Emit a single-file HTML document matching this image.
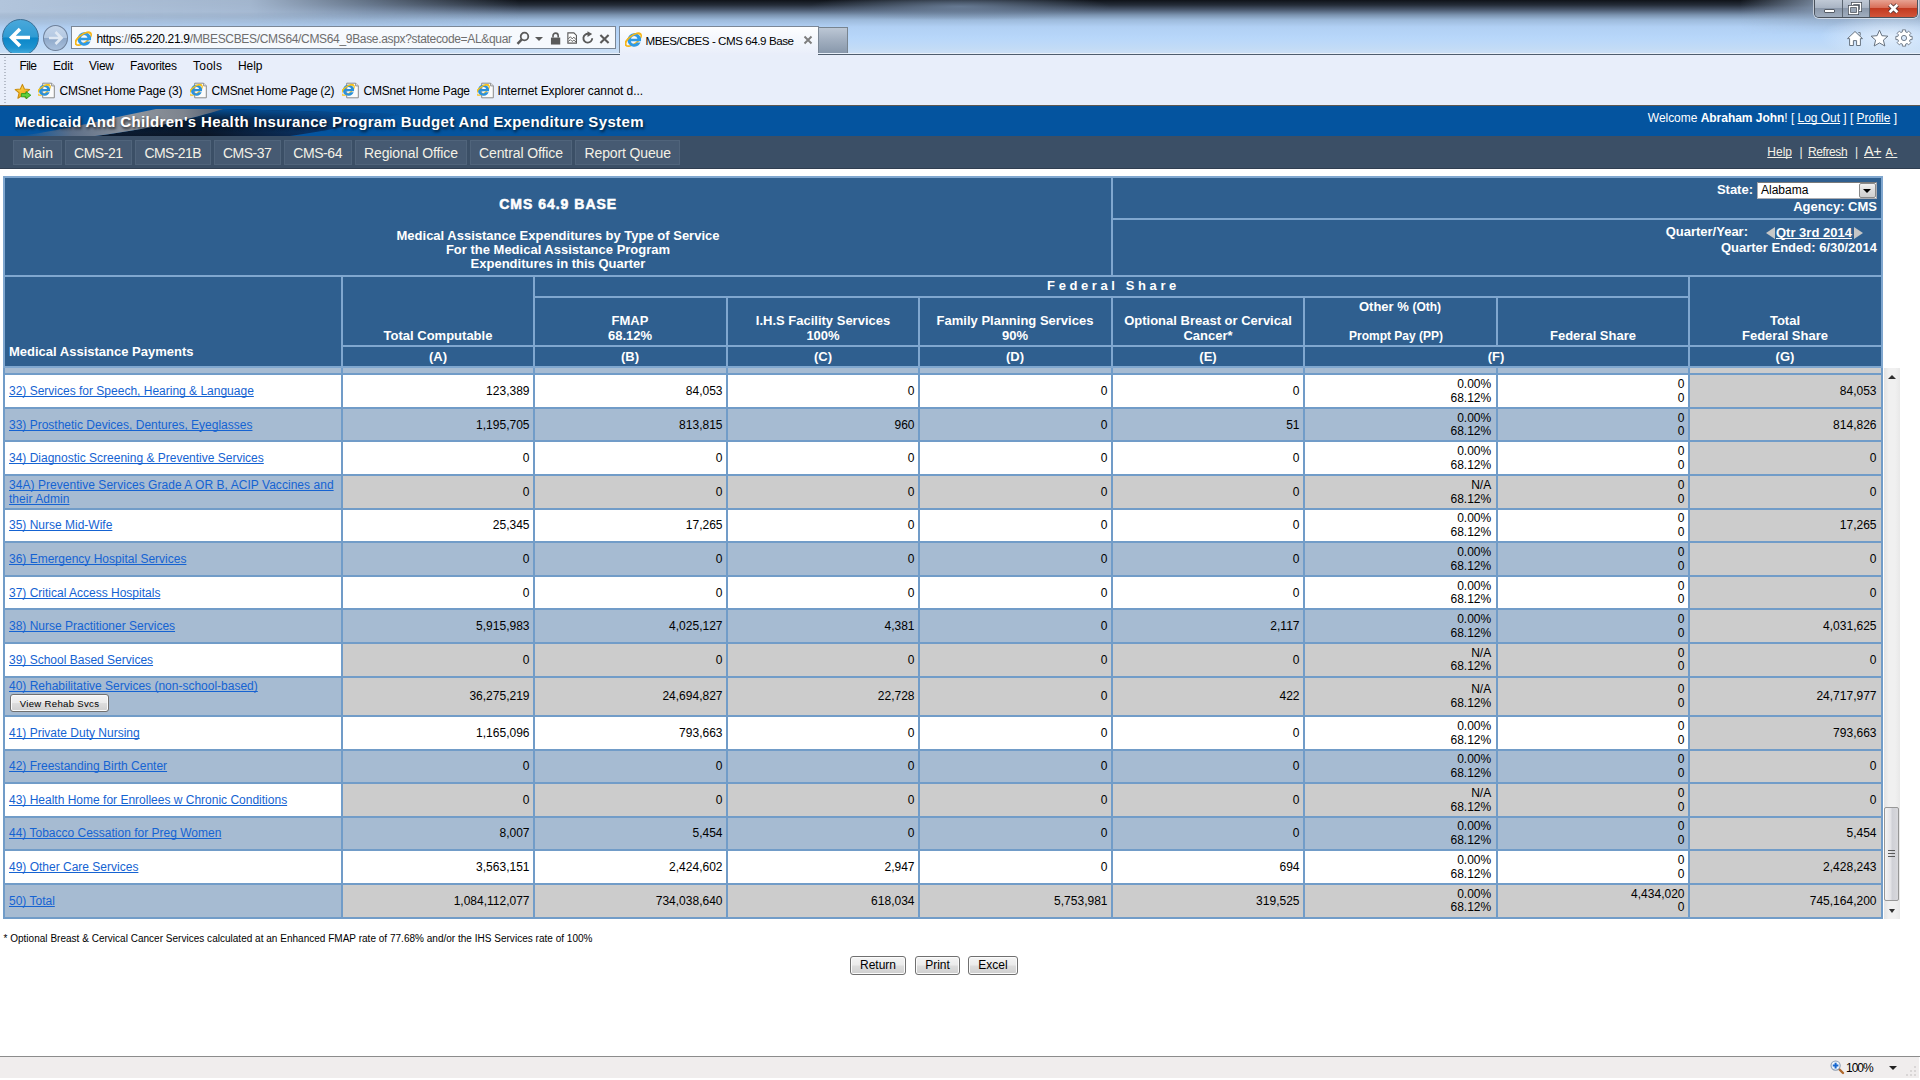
<!DOCTYPE html>
<html><head><meta charset="utf-8"><title>MBES/CBES - CMS 64.9 Base</title>
<style>
html,body{margin:0;padding:0;}
body{width:1920px;height:1080px;overflow:hidden;background:#fff;position:relative;font-family:"Liberation Sans",sans-serif;font-size:12px;color:#000;}
div,span,a{box-sizing:border-box;}
*{text-decoration-skip-ink:none;}
.abs{position:absolute;}
a{color:#1563d2;text-decoration:underline;text-decoration-skip-ink:none;text-underline-offset:1px;}
u{text-decoration-skip-ink:none;}
.ui{font-family:"Liberation Sans",sans-serif;font-size:12px;color:#000;white-space:nowrap;position:absolute;}
.hd{position:absolute;color:#fff;font-weight:bold;font-size:13px;line-height:15px;text-align:center;white-space:nowrap;}
.c{position:absolute;font-size:12px;line-height:14px;white-space:nowrap;}
.n{position:absolute;font-size:12px;line-height:14px;text-align:right;white-space:nowrap;}
.btn{position:absolute;border:1px solid #707070;border-radius:3px;background:linear-gradient(#f4f4f4 0%,#ebebeb 48%,#dddddd 52%,#cfcfcf 100%);box-shadow:inset 0 0 0 1px #fbfbfb;text-align:center;color:#000;white-space:nowrap;}
</style></head><body>

<div class="abs" style="left:0;top:0;width:1920px;height:54px;background:linear-gradient(180deg,#0f1319 0px,#252d39 5px,#4d5c72 10px,#7b93b0 15px,#9dbadb 20px,#b1d0f4 27px,#b8d7fa 38px,#c2dbf6 48px,#cde0f4 54px);"></div>
<div class="abs" style="left:0;top:0;width:520px;height:30px;background:linear-gradient(90deg,rgba(178,197,220,1) 0px,rgba(170,190,215,0.95) 250px,rgba(150,172,200,0.6) 370px,rgba(150,172,200,0) 520px);-webkit-mask-image:linear-gradient(180deg,#000 0,#000 12px,transparent 30px);mask-image:linear-gradient(180deg,#000 0,#000 12px,transparent 30px);"></div>
<div class="abs" style="left:800px;top:0;width:320px;height:22px;background:radial-gradient(ellipse 150px 14px at 50% 30%,rgba(120,142,170,0.75),rgba(120,142,170,0));"></div>
<div class="abs" style="left:1740px;top:0;width:180px;height:34px;background:linear-gradient(270deg,rgba(160,180,204,0.95) 0px,rgba(150,170,196,0.85) 90px,rgba(150,170,196,0) 180px);-webkit-mask-image:linear-gradient(180deg,#000 0,#000 8px,transparent 34px);mask-image:linear-gradient(180deg,#000 0,#000 8px,transparent 34px);"></div>
<div class="abs" style="left:1800px;top:16px;width:120px;height:38px;background:radial-gradient(ellipse 70px 22px at 75% 55%,rgba(240,246,253,0.75),rgba(240,246,253,0));"></div>
<div class="abs" style="left:1814px;top:-1px;width:104px;height:19px;border:1px solid #4a525c;border-top:none;border-radius:0 0 5px 5px;overflow:hidden;box-shadow:0 0 0 1px rgba(255,255,255,0.55);"><div class="abs" style="left:0;top:0;width:28px;height:19px;background:linear-gradient(#c3ccd8 0,#aab5c4 45%,#8b98aa 50%,#a3b0c1 100%);border-right:1px solid #5b6570;"></div><div class="abs" style="left:28px;top:0;width:27px;height:19px;background:linear-gradient(#c3ccd8 0,#aab5c4 45%,#8b98aa 50%,#a3b0c1 100%);border-right:1px solid #5b6570;"></div><div class="abs" style="left:55px;top:0;width:49px;height:19px;background:linear-gradient(#e9a99a 0,#d9705a 45%,#c23a20 50%,#d4583d 100%);"></div></div>
<div class="abs" style="left:1824px;top:9px;width:11px;height:4px;background:#fff;border:1px solid #555c66;border-radius:1px;"></div>
<svg class="abs" style="left:1848px;top:2px" width="14" height="13" viewBox="0 0 14 13"><rect x="4.5" y="1.5" width="8" height="7" fill="none" stroke="#48505a" stroke-width="3"/><rect x="4.5" y="1.5" width="8" height="7" fill="none" stroke="#fff" stroke-width="1.4"/><rect x="1.5" y="4.5" width="8" height="7" fill="#9aa6b6" stroke="#48505a" stroke-width="3"/><rect x="1.5" y="4.5" width="8" height="7" fill="none" stroke="#fff" stroke-width="1.4"/></svg>
<svg class="abs" style="left:1887px;top:3px" width="13" height="11" viewBox="0 0 13 11"><path d="M2.6 1.8 L10.4 9.2 M10.4 1.8 L2.6 9.2" stroke="#553636" stroke-width="4.4" stroke-linecap="butt"/><path d="M2.6 1.8 L10.4 9.2 M10.4 1.8 L2.6 9.2" stroke="#fff" stroke-width="2.7" stroke-linecap="butt"/></svg>
<div class="abs" style="left:0;top:0;width:80px;height:53px;overflow:hidden;"><div class="abs" style="left:2px;top:19px;width:37px;height:37px;border-radius:50%;border:1px solid #3a6f96;background:linear-gradient(180deg,#4aa8db 0%,#2f9bd3 49%,#0a86c8 51%,#1d93d0 80%,#54b3e0 100%);"></div><svg class="abs" style="left:9px;top:27px" width="23" height="21" viewBox="0 0 23 21"><path d="M11 2 L2.5 10.5 L11 19 M3.5 10.5 H21" fill="none" stroke="#fff" stroke-width="3.6" stroke-linejoin="miter"/></svg><div class="abs" style="left:43px;top:25px;width:25px;height:26px;border-radius:50%;border:1px solid #6f819a;background:linear-gradient(180deg,#c3d4e9 0%,#b3c8e2 49%,#8ea8c9 51%,#a9c0dc 100%);"></div><svg class="abs" style="left:47px;top:30px" width="17" height="16" viewBox="0 0 17 16"><path d="M8.5 2 L14.5 8 L8.5 14 M14 8 H2" fill="none" stroke="#dfe8f3" stroke-width="2.6"/></svg></div>
<div class="abs" style="left:71px;top:26px;width:545px;height:23px;border:1px solid #7b8796;background:#f6f9fd;"></div>
<svg class="abs" style="left:74.5px;top:29.5px" width="17.5" height="17.5" viewBox="0 0 16 16"><ellipse cx="7.6" cy="8" rx="8.4" ry="3.9" transform="rotate(-36 7.6 8)" fill="none" stroke="#f6b619" stroke-width="1.5"/><path d="M8.4 2a6.2 6.2 0 1 0 5.8 8.6h-3.4a3.1 3.1 0 0 1-5.5-1.3h9.3a6.2 6.2 0 0 0-6.2-7.3zm-3 5a3.1 3.1 0 0 1 6 0z" fill="#2e9ae4"/><path d="M-0.8 8 A8.4 3.9 0 0 1 16 8" transform="rotate(-36 7.6 8)" fill="none" stroke="#f6b619" stroke-width="1.5"/></svg>
<div class="ui" style="left:96.5px;top:32px;font-size:12px;line-height:14px;font-weight:normal;letter-spacing:-0.330px;"><span style="color:#000">https</span><span style="color:#6e6e6e">://</span><span style="color:#000">65.220.21.9</span><span style="color:#6e6e6e">/MBESCBES/CMS64/CMS64_9Base.aspx?statecode=AL&amp;quar</span></div>
<svg class="abs" style="left:516px;top:31px" width="14" height="15" viewBox="0 0 14 15"><circle cx="8.5" cy="5.5" r="3.8" fill="none" stroke="#5a5a5a" stroke-width="1.8"/><path d="M5.8 8.3 L1.5 12.8" stroke="#5a5a5a" stroke-width="2.4"/></svg>
<div class="abs" style="left:535px;top:37px;width:0;height:0;border-left:4px solid transparent;border-right:4px solid transparent;border-top:4px solid #5a5a5a;"></div>
<svg class="abs" style="left:550px;top:31.5px" width="11.2" height="13" viewBox="0 0 12 14"><rect x="1" y="6" width="10" height="7.5" fill="#5a5a5a"/><path d="M3.2 6 V4 a2.8 2.8 0 0 1 5.6 0 V6" fill="none" stroke="#5a5a5a" stroke-width="1.7"/></svg>
<svg class="abs" style="left:567px;top:32px" width="10.3" height="12" viewBox="0 0 12 14"><path d="M1 1 H8 L11 4 V13 H1 Z" fill="#fff" stroke="#5a5a5a" stroke-width="1.3"/><path d="M1.5 8 L4 5.5 L6 8 L8 6 L10.5 9 M1.5 11 L4 9 L6 11 L8 9.5 L10.5 11.5" fill="none" stroke="#5a5a5a" stroke-width="1.1"/></svg>
<svg class="abs" style="left:581px;top:31px" width="14" height="14" viewBox="0 0 14 14"><path d="M11.2 7.2 A4.4 4.4 0 1 1 7.6 2.9" fill="none" stroke="#5a5a5a" stroke-width="1.9"/><path d="M6.5 0.2 L11.2 3 L6.5 6 Z" fill="#5a5a5a"/></svg>
<svg class="abs" style="left:598.5px;top:33.5px" width="11" height="10" viewBox="0 0 12 11"><path d="M1.5 1 L10.5 10 M10.5 1 L1.5 10" stroke="#5a5a5a" stroke-width="2.3"/></svg>
<div class="abs" style="left:619px;top:26px;width:200px;height:28px;border:1px solid #7b8796;border-bottom:none;background:linear-gradient(#fdfeff,#f1f5fc 60%,#e9eefa);"></div>
<svg class="abs" style="left:624.5px;top:31px" width="17.5" height="17.5" viewBox="0 0 16 16"><ellipse cx="7.6" cy="8" rx="8.4" ry="3.9" transform="rotate(-36 7.6 8)" fill="none" stroke="#f6b619" stroke-width="1.5"/><path d="M8.4 2a6.2 6.2 0 1 0 5.8 8.6h-3.4a3.1 3.1 0 0 1-5.5-1.3h9.3a6.2 6.2 0 0 0-6.2-7.3zm-3 5a3.1 3.1 0 0 1 6 0z" fill="#2e9ae4"/><path d="M-0.8 8 A8.4 3.9 0 0 1 16 8" transform="rotate(-36 7.6 8)" fill="none" stroke="#f6b619" stroke-width="1.5"/></svg>
<div class="ui" style="left:645.5px;top:34px;font-size:11.6px;line-height:14px;font-weight:normal;letter-spacing:-0.444px;">MBES/CBES - CMS 64.9 Base</div>
<svg class="abs" style="left:803px;top:35px" width="10" height="10" viewBox="0 0 10 10"><path d="M1.5 1.5 L8.5 8.5 M8.5 1.5 L1.5 8.5" stroke="#7d7d7d" stroke-width="1.9"/></svg>
<div class="abs" style="left:819px;top:27px;width:29px;height:26px;border:1px solid #78848f;border-left:none;border-bottom:none;background:linear-gradient(180deg,#bcc7d5 0%,#a3b0c1 45%,#8898ab 100%);"></div>
<svg class="abs" style="left:1846px;top:30px" width="18" height="17" viewBox="0 0 18 17"><path d="M9 1.5 L1.5 8.6 H3.6 V15.5 H7.4 V10.6 H10.6 V15.5 H14.4 V8.6 H16.5 Z M12.3 2.6 h1.9 v3" fill="#fff" stroke="#66727f" stroke-width="1" stroke-linejoin="round"/></svg>
<svg class="abs" style="left:1870px;top:29px" width="19" height="18" viewBox="0 0 19 18"><path d="M9.5 1.2 L11.9 6.7 L17.9 7.2 L13.4 11.1 L14.8 17 L9.5 13.9 L4.2 17 L5.6 11.1 L1.1 7.2 L7.1 6.7 Z" fill="#fff" stroke="#66727f" stroke-width="1" stroke-linejoin="round"/></svg>
<svg class="abs" style="left:1895px;top:29px" width="18" height="18" viewBox="0 0 18 18"><g fill="#fff" stroke="#66727f" stroke-width="0.9"><path fill-rule="evenodd" d="M17.15,7.43 L17.15,10.57 L15.07,10.68 L14.48,12.11 L15.87,13.65 L13.65,15.87 L12.11,14.48 L10.68,15.07 L10.57,17.15 L7.43,17.15 L7.32,15.07 L5.89,14.48 L4.35,15.87 L2.13,13.65 L3.52,12.11 L2.93,10.68 L0.85,10.57 L0.85,7.43 L2.93,7.32 L3.52,5.89 L2.13,4.35 L4.35,2.13 L5.89,3.52 L7.32,2.93 L7.43,0.85 L10.57,0.85 L10.68,2.93 L12.11,3.52 L13.65,2.13 L15.87,4.35 L14.48,5.89 L15.07,7.32 Z M11.6 9 A2.6 2.6 0 1 0 6.4 9 A2.6 2.6 0 1 0 11.6 9 Z"/></g></svg>
<div class="abs" style="left:0;top:53px;width:1920px;height:1px;background:#e8f0fa;"></div>
<div class="abs" style="left:0;top:54px;width:1920px;height:1px;background:#4f5d6d;"></div>
<div class="abs" style="left:620px;top:53px;width:198px;height:2px;background:#e9eefa;"></div>
<div class="abs" style="left:0;top:55px;width:1920px;height:50px;background:#e8eefa;"></div>
<div class="abs" style="left:4px;top:57px;width:2px;height:46px;background:repeating-linear-gradient(180deg,#b5bcc9 0,#b5bcc9 1px,transparent 1px,transparent 3px);"></div>
<div class="ui" style="left:19.5px;top:58px;font-size:12px;line-height:16px;font-weight:normal;letter-spacing:-0.615px;">File</div>
<div class="ui" style="left:53px;top:58px;font-size:12px;line-height:16px;font-weight:normal;letter-spacing:-0.229px;">Edit</div>
<div class="ui" style="left:89px;top:58px;font-size:12px;line-height:16px;font-weight:normal;letter-spacing:-0.266px;">View</div>
<div class="ui" style="left:130px;top:58px;font-size:12px;line-height:16px;font-weight:normal;letter-spacing:-0.295px;">Favorites</div>
<div class="ui" style="left:193px;top:58px;font-size:12px;line-height:16px;font-weight:normal;letter-spacing:0.246px;">Tools</div>
<div class="ui" style="left:238px;top:58px;font-size:12px;line-height:16px;font-weight:normal;letter-spacing:-0.062px;">Help</div>
<svg class="abs" style="left:14px;top:83px" width="18" height="17" viewBox="0 0 18 17"><defs><linearGradient id="stg" x1="0" y1="0" x2="0.6" y2="1"><stop offset="0" stop-color="#fff3b8"/><stop offset="0.45" stop-color="#fbc638"/><stop offset="1" stop-color="#ef9d12"/></linearGradient></defs><path d="M8.4 1.4 L10.4 6 L15.6 6.5 L11.7 9.9 L12.9 15.2 L8.4 12.4 L3.9 15.2 L5.1 9.9 L1.2 6.5 L6.4 6 Z" fill="url(#stg)" stroke="#c98d0e" stroke-width="1.1" stroke-linejoin="round"/><path d="M7.3 10.6 H12 V8.6 L16.8 12.2 L12 15.8 V13.8 H7.3 Z" fill="#5fd13f" stroke="#2e9a1c" stroke-width="0.9" stroke-linejoin="round"/></svg>
<svg class="abs" style="left:38px;top:82.3px" width="17" height="17" viewBox="0 0 17 17"><path d="M4.7 1.2 H13.6 L16.3 3.9 V15.8 H4.7 Z" fill="#fbfbfb" stroke="#8a8a8a" stroke-width="1"/><path d="M13.6 1.2 V3.9 H16.3" fill="#eaeaea" stroke="#8a8a8a" stroke-width="0.9"/><g transform="translate(-0.95,0.9) scale(0.887)"><ellipse cx="7.6" cy="8" rx="8.4" ry="3.9" transform="rotate(-36 7.6 8)" fill="none" stroke="#f7c21a" stroke-width="1.5"/><path d="M8.4 2a6.2 6.2 0 1 0 5.8 8.6h-3.4a3.1 3.1 0 0 1-5.5-1.3h9.3a6.2 6.2 0 0 0-6.2-7.3zm-3 5a3.1 3.1 0 0 1 6 0z" fill="#2a90da"/><path d="M-0.8 8 A8.4 3.9 0 0 1 16 8" transform="rotate(-36 7.6 8)" fill="none" stroke="#f7c21a" stroke-width="1.5"/></g></svg>
<div class="ui" style="left:59.5px;top:83px;font-size:12px;line-height:16px;font-weight:normal;letter-spacing:-0.266px;">CMSnet Home Page (3)</div>
<svg class="abs" style="left:190px;top:82.3px" width="17" height="17" viewBox="0 0 17 17"><path d="M4.7 1.2 H13.6 L16.3 3.9 V15.8 H4.7 Z" fill="#fbfbfb" stroke="#8a8a8a" stroke-width="1"/><path d="M13.6 1.2 V3.9 H16.3" fill="#eaeaea" stroke="#8a8a8a" stroke-width="0.9"/><g transform="translate(-0.95,0.9) scale(0.887)"><ellipse cx="7.6" cy="8" rx="8.4" ry="3.9" transform="rotate(-36 7.6 8)" fill="none" stroke="#f7c21a" stroke-width="1.5"/><path d="M8.4 2a6.2 6.2 0 1 0 5.8 8.6h-3.4a3.1 3.1 0 0 1-5.5-1.3h9.3a6.2 6.2 0 0 0-6.2-7.3zm-3 5a3.1 3.1 0 0 1 6 0z" fill="#2a90da"/><path d="M-0.8 8 A8.4 3.9 0 0 1 16 8" transform="rotate(-36 7.6 8)" fill="none" stroke="#f7c21a" stroke-width="1.5"/></g></svg>
<div class="ui" style="left:211.5px;top:83px;font-size:12px;line-height:16px;font-weight:normal;letter-spacing:-0.266px;">CMSnet Home Page (2)</div>
<svg class="abs" style="left:342px;top:82.3px" width="17" height="17" viewBox="0 0 17 17"><path d="M4.7 1.2 H13.6 L16.3 3.9 V15.8 H4.7 Z" fill="#fbfbfb" stroke="#8a8a8a" stroke-width="1"/><path d="M13.6 1.2 V3.9 H16.3" fill="#eaeaea" stroke="#8a8a8a" stroke-width="0.9"/><g transform="translate(-0.95,0.9) scale(0.887)"><ellipse cx="7.6" cy="8" rx="8.4" ry="3.9" transform="rotate(-36 7.6 8)" fill="none" stroke="#f7c21a" stroke-width="1.5"/><path d="M8.4 2a6.2 6.2 0 1 0 5.8 8.6h-3.4a3.1 3.1 0 0 1-5.5-1.3h9.3a6.2 6.2 0 0 0-6.2-7.3zm-3 5a3.1 3.1 0 0 1 6 0z" fill="#2a90da"/><path d="M-0.8 8 A8.4 3.9 0 0 1 16 8" transform="rotate(-36 7.6 8)" fill="none" stroke="#f7c21a" stroke-width="1.5"/></g></svg>
<div class="ui" style="left:363.5px;top:83px;font-size:12px;line-height:16px;font-weight:normal;letter-spacing:-0.237px;">CMSnet Home Page</div>
<svg class="abs" style="left:477px;top:82.3px" width="17" height="17" viewBox="0 0 17 17"><path d="M4.7 1.2 H13.6 L16.3 3.9 V15.8 H4.7 Z" fill="#fbfbfb" stroke="#8a8a8a" stroke-width="1"/><path d="M13.6 1.2 V3.9 H16.3" fill="#eaeaea" stroke="#8a8a8a" stroke-width="0.9"/><g transform="translate(-0.95,0.9) scale(0.887)"><ellipse cx="7.6" cy="8" rx="8.4" ry="3.9" transform="rotate(-36 7.6 8)" fill="none" stroke="#f7c21a" stroke-width="1.5"/><path d="M8.4 2a6.2 6.2 0 1 0 5.8 8.6h-3.4a3.1 3.1 0 0 1-5.5-1.3h9.3a6.2 6.2 0 0 0-6.2-7.3zm-3 5a3.1 3.1 0 0 1 6 0z" fill="#2a90da"/><path d="M-0.8 8 A8.4 3.9 0 0 1 16 8" transform="rotate(-36 7.6 8)" fill="none" stroke="#f7c21a" stroke-width="1.5"/></g></svg>
<div class="ui" style="left:497.5px;top:83px;font-size:12px;line-height:16px;font-weight:normal;letter-spacing:-0.093px;">Internet Explorer cannot d...</div>
<div class="abs" style="left:0;top:105px;width:1920px;height:31px;background:#04549f;overflow:hidden;"><svg class="abs" style="left:0;top:0" width="700" height="31" viewBox="0 0 700 31"><defs><linearGradient id="sw1" gradientUnits="userSpaceOnUse" x1="20" y1="31" x2="225" y2="4"><stop offset="0" stop-color="#04549f"/><stop offset="0.25" stop-color="#5d6f88"/><stop offset="0.55" stop-color="#8f959d"/><stop offset="0.8" stop-color="#7d848e"/><stop offset="1" stop-color="#4c5a6e"/></linearGradient><linearGradient id="sw2" gradientUnits="userSpaceOnUse" x1="90" y1="0" x2="420" y2="0"><stop offset="0" stop-color="#0b1a2e"/><stop offset="0.35" stop-color="#0a1424"/><stop offset="0.7" stop-color="#0a3163"/><stop offset="1" stop-color="#04549f"/></linearGradient><linearGradient id="sw3" gradientUnits="userSpaceOnUse" x1="0" y1="4" x2="0" y2="31"><stop offset="0" stop-color="#04549f" stop-opacity="0.9"/><stop offset="0.35" stop-color="#04549f" stop-opacity="0.25"/><stop offset="1" stop-color="#04549f" stop-opacity="0"/></linearGradient></defs><path d="M95 31 C150 24 190 14 224 4 L300 6 L400 9 C360 19 320 27 290 31 Z" fill="url(#sw2)"/><path d="M95 31 C150 24 190 14 224 4 L300 6 L400 9 C360 19 320 27 290 31 Z" fill="url(#sw3)"/><path d="M20 31 C70 24 115 12 156 4 L224 4 C190 14 150 24 95 31 Z" fill="url(#sw1)"/></svg></div>
<div class="abs" style="left:14.5px;top:112px;font-weight:bold;font-size:15px;line-height:20px;color:#fff;white-space:nowrap;letter-spacing:0.354px;text-shadow:1px 2px 3px rgba(0,0,0,0.75);">Medicaid And Children's Health Insurance Program Budget And Expenditure System</div>
<div class="abs" style="left:1647.8px;top:110px;font-size:12px;line-height:16px;color:#fff;white-space:nowrap;letter-spacing:-0.031px;">Welcome <b>Abraham John</b>! [ <u>Log Out</u> ] [ <u>Profile</u> ]</div>
<div class="abs" style="left:0;top:136px;width:1920px;height:33px;background:#3b4f66;border-bottom:1px solid #2f3e51;"></div>
<div class="abs" style="left:0;top:105px;width:1920px;height:1px;background:#5f574f;"></div>
<div class="abs" style="left:13px;top:140px;width:49px;height:25px;background:#465a72;border:1px solid #50647b;"></div>
<div class="abs" style="left:22.5px;top:145px;color:#f4f1e6;font-size:14px;line-height:17px;white-space:nowrap;letter-spacing:0.047px;">Main</div>
<div class="abs" style="left:65px;top:140px;width:67px;height:25px;background:#465a72;border:1px solid #50647b;"></div>
<div class="abs" style="left:74px;top:145px;color:#f4f1e6;font-size:14px;line-height:17px;white-space:nowrap;letter-spacing:-0.472px;">CMS-21</div>
<div class="abs" style="left:135px;top:140px;width:76px;height:25px;background:#465a72;border:1px solid #50647b;"></div>
<div class="abs" style="left:144.5px;top:145px;color:#f4f1e6;font-size:14px;line-height:17px;white-space:nowrap;letter-spacing:-0.615px;">CMS-21B</div>
<div class="abs" style="left:214px;top:140px;width:67px;height:25px;background:#465a72;border:1px solid #50647b;"></div>
<div class="abs" style="left:223px;top:145px;color:#f4f1e6;font-size:14px;line-height:17px;white-space:nowrap;letter-spacing:-0.512px;">CMS-37</div>
<div class="abs" style="left:284px;top:140px;width:68px;height:25px;background:#465a72;border:1px solid #50647b;"></div>
<div class="abs" style="left:293.2px;top:145px;color:#f4f1e6;font-size:14px;line-height:17px;white-space:nowrap;letter-spacing:-0.412px;">CMS-64</div>
<div class="abs" style="left:355px;top:140px;width:112px;height:25px;background:#465a72;border:1px solid #50647b;"></div>
<div class="abs" style="left:364px;top:145px;color:#f4f1e6;font-size:14px;line-height:17px;white-space:nowrap;letter-spacing:-0.105px;">Regional Office</div>
<div class="abs" style="left:470px;top:140px;width:102px;height:25px;background:#465a72;border:1px solid #50647b;"></div>
<div class="abs" style="left:479px;top:145px;color:#f4f1e6;font-size:14px;line-height:17px;white-space:nowrap;letter-spacing:-0.103px;">Central Office</div>
<div class="abs" style="left:575px;top:140px;width:105px;height:25px;background:#465a72;border:1px solid #50647b;"></div>
<div class="abs" style="left:584.5px;top:145px;color:#f4f1e6;font-size:14px;line-height:17px;white-space:nowrap;letter-spacing:-0.132px;">Report Queue</div>
<div class="abs" style="left:1767.3px;top:144px;font-size:12px;line-height:16px;color:#f4f1e6;white-space:nowrap;letter-spacing:0.004px;"><u>Help</u></div>
<div class="abs" style="left:1799.5px;top:144px;font-size:12px;line-height:16px;color:#f4f1e6;white-space:nowrap;">|</div>
<div class="abs" style="left:1808px;top:144px;font-size:12px;line-height:16px;color:#f4f1e6;white-space:nowrap;letter-spacing:-0.405px;"><u>Refresh</u></div>
<div class="abs" style="left:1855px;top:144px;font-size:12px;line-height:16px;color:#f4f1e6;white-space:nowrap;">|</div>
<div class="abs" style="left:1864px;top:142.5px;font-size:14.5px;line-height:16px;color:#f4f1e6;white-space:nowrap;letter-spacing:-0.441px;"><u>A+</u></div>
<div class="abs" style="left:1885.6px;top:144.3px;font-size:11px;line-height:16px;color:#f4f1e6;white-space:nowrap;letter-spacing:0.400px;"><u>A-</u></div>
<div style="position:absolute;left:3px;top:176px;width:1880px;height:192px;background:#80a7cf;"></div>
<div style="position:absolute;left:3px;top:368px;width:1880px;height:551px;background:#719cc8;"></div>
<div style="position:absolute;left:5px;top:178px;width:1106px;height:97px;background:#2f5f8f;"></div>
<div style="position:absolute;left:1113px;top:178px;width:768px;height:40px;background:#2f5f8f;"></div>
<div style="position:absolute;left:1113px;top:220px;width:768px;height:55px;background:#2f5f8f;"></div>
<div style="position:absolute;left:5px;top:277px;width:336px;height:89px;background:#2f5f8f;"></div>
<div style="position:absolute;left:343px;top:277px;width:190px;height:68px;background:#2f5f8f;"></div>
<div style="position:absolute;left:535px;top:277px;width:1153px;height:19px;background:#2f5f8f;"></div>
<div style="position:absolute;left:1690px;top:277px;width:191px;height:68px;background:#2f5f8f;"></div>
<div style="position:absolute;left:535px;top:298px;width:191px;height:47px;background:#2f5f8f;"></div>
<div style="position:absolute;left:728px;top:298px;width:190px;height:47px;background:#2f5f8f;"></div>
<div style="position:absolute;left:920px;top:298px;width:191px;height:47px;background:#2f5f8f;"></div>
<div style="position:absolute;left:1113px;top:298px;width:190px;height:47px;background:#2f5f8f;"></div>
<div style="position:absolute;left:1305px;top:298px;width:191px;height:47px;background:#2f5f8f;"></div>
<div style="position:absolute;left:1498px;top:298px;width:190px;height:47px;background:#2f5f8f;"></div>
<div style="position:absolute;left:343px;top:347px;width:190px;height:19px;background:#2f5f8f;"></div>
<div style="position:absolute;left:535px;top:347px;width:191px;height:19px;background:#2f5f8f;"></div>
<div style="position:absolute;left:728px;top:347px;width:190px;height:19px;background:#2f5f8f;"></div>
<div style="position:absolute;left:920px;top:347px;width:191px;height:19px;background:#2f5f8f;"></div>
<div style="position:absolute;left:1113px;top:347px;width:190px;height:19px;background:#2f5f8f;"></div>
<div style="position:absolute;left:1305px;top:347px;width:383px;height:19px;background:#2f5f8f;"></div>
<div style="position:absolute;left:1690px;top:347px;width:191px;height:19px;background:#2f5f8f;"></div>
<div class="hd" style="left:358.20000000000005px;width:400px;top:197px;font-size:14px;-webkit-text-stroke:0.55px #fff;letter-spacing:0.996px;">CMS 64.9 BASE</div>
<div class="hd" style="left:358px;width:400px;top:229px;line-height:14px;">Medical Assistance Expenditures by Type of Service<br>For the Medical Assistance Program<br>Expenditures in this Quarter</div>
<div class="hd" style="left:913.5px;width:400px;top:278px;letter-spacing:3.6px;">Federal Share</div>
<div class="hd" style="left:238px;width:400px;top:328px;">Total Computable</div>
<div class="hd" style="left:430px;width:400px;top:313px;">FMAP<br>68.12%</div>
<div class="hd" style="left:623px;width:400px;top:313px;">I.H.S Facility Services<br>100%</div>
<div class="hd" style="left:815px;width:400px;top:313px;">Family Planning Services<br>90%</div>
<div class="hd" style="left:1008px;width:400px;top:313px;">Optional Breast or Cervical<br>Cancer*</div>
<div class="hd" style="left:1200px;width:400px;top:299px;">Other % <span style="font-size:12px">(Oth)</span></div>
<div class="hd" style="left:1196px;width:400px;top:328px;"><span style="font-size:12px">Prompt Pay (PP)</span></div>
<div class="hd" style="left:1393px;width:400px;top:328px;">Federal Share</div>
<div class="hd" style="left:1585px;width:400px;top:313px;">Total<br>Federal Share</div>
<div class="hd" style="left:9px;top:344px;text-align:left;">Medical Assistance Payments</div>
<div class="hd" style="left:238px;width:400px;top:349px;">(A)</div>
<div class="hd" style="left:430px;width:400px;top:349px;">(B)</div>
<div class="hd" style="left:623px;width:400px;top:349px;">(C)</div>
<div class="hd" style="left:815px;width:400px;top:349px;">(D)</div>
<div class="hd" style="left:1008px;width:400px;top:349px;">(E)</div>
<div class="hd" style="left:1296px;width:400px;top:349px;">(F)</div>
<div class="hd" style="left:1585px;width:400px;top:349px;">(G)</div>
<div class="hd" style="right:167px;top:182px;text-align:right;">State:</div>
<div class="abs" style="left:1757px;top:182px;width:120px;height:17px;background:#fff;border:1px solid #abadb3;border-top-color:#7a7a7a;"></div>
<div class="abs" style="left:1761px;top:183px;font-size:12px;line-height:14px;color:#000;">Alabama</div>
<div class="abs" style="left:1859px;top:183px;width:17px;height:15px;border:1px solid #8a8a8a;border-radius:2px;background:linear-gradient(#f2f2f2,#dcdcdc 50%,#cfcfcf);"></div>
<div class="abs" style="left:1863px;top:189px;width:0;height:0;border-left:4px solid transparent;border-right:4px solid transparent;border-top:4px solid #000;"></div>
<div class="hd" style="right:43px;top:199px;text-align:right;">Agency: CMS</div>
<div class="hd" style="right:172px;top:224px;text-align:right;">Quarter/Year:</div>
<div class="hd" style="left:1776px;top:225px;text-align:left;text-decoration:underline;">Qtr 3rd 2014</div>
<div class="abs" style="left:1766px;top:227px;width:0;height:0;border-top:6px solid transparent;border-bottom:6px solid transparent;border-right:9px solid #c6c6c6;"></div>
<div class="abs" style="left:1854px;top:227px;width:0;height:0;border-top:6px solid transparent;border-bottom:6px solid transparent;border-left:9px solid #c6c6c6;"></div>
<div class="hd" style="right:43px;top:240px;text-align:right;">Quarter Ended: 6/30/2014</div>
<div style="position:absolute;left:5px;top:368px;width:336px;height:5px;background:#a6bbd2;"></div>
<div style="position:absolute;left:343px;top:368px;width:190px;height:5px;background:#a6bbd2;"></div>
<div style="position:absolute;left:535px;top:368px;width:191px;height:5px;background:#a6bbd2;"></div>
<div style="position:absolute;left:728px;top:368px;width:190px;height:5px;background:#a6bbd2;"></div>
<div style="position:absolute;left:920px;top:368px;width:191px;height:5px;background:#a6bbd2;"></div>
<div style="position:absolute;left:1113px;top:368px;width:190px;height:5px;background:#a6bbd2;"></div>
<div style="position:absolute;left:1305px;top:368px;width:191px;height:5px;background:#a6bbd2;"></div>
<div style="position:absolute;left:1498px;top:368px;width:190px;height:5px;background:#a6bbd2;"></div>
<div style="position:absolute;left:1690px;top:368px;width:191px;height:5px;background:#cccccc;"></div>
<div style="position:absolute;left:5px;top:375px;width:336px;height:32px;background:#ffffff;"></div>
<div style="position:absolute;left:343px;top:375px;width:190px;height:32px;background:#ffffff;"></div>
<div style="position:absolute;left:535px;top:375px;width:191px;height:32px;background:#ffffff;"></div>
<div style="position:absolute;left:728px;top:375px;width:190px;height:32px;background:#ffffff;"></div>
<div style="position:absolute;left:920px;top:375px;width:191px;height:32px;background:#ffffff;"></div>
<div style="position:absolute;left:1113px;top:375px;width:190px;height:32px;background:#ffffff;"></div>
<div style="position:absolute;left:1305px;top:375px;width:191px;height:32px;background:#ffffff;"></div>
<div style="position:absolute;left:1498px;top:375px;width:190px;height:32px;background:#ffffff;"></div>
<div style="position:absolute;left:1690px;top:375px;width:191px;height:32px;background:#cccccc;"></div>
<div class="c" style="left:9px;top:384px;"><a>32) Services for Speech, Hearing &amp; Language</a></div>
<div class="n" style="left:343px;width:186.5px;top:384px;">123,389</div>
<div class="n" style="left:535px;width:187.5px;top:384px;">84,053</div>
<div class="n" style="left:728px;width:186.5px;top:384px;">0</div>
<div class="n" style="left:920px;width:187.5px;top:384px;">0</div>
<div class="n" style="left:1113px;width:186.5px;top:384px;">0</div>
<div class="n" style="left:1305px;width:186.2px;top:377px;">0.00%</div>
<div class="n" style="left:1305px;width:186.2px;top:391px;">68.12%</div>
<div class="n" style="left:1498px;width:186.5px;top:377px;">0</div>
<div class="n" style="left:1498px;width:186.5px;top:391px;">0</div>
<div class="n" style="left:1690px;width:186.5px;top:384px;">84,053</div>
<div style="position:absolute;left:5px;top:409px;width:336px;height:31px;background:#a6bbd2;"></div>
<div style="position:absolute;left:343px;top:409px;width:190px;height:31px;background:#a6bbd2;"></div>
<div style="position:absolute;left:535px;top:409px;width:191px;height:31px;background:#a6bbd2;"></div>
<div style="position:absolute;left:728px;top:409px;width:190px;height:31px;background:#a6bbd2;"></div>
<div style="position:absolute;left:920px;top:409px;width:191px;height:31px;background:#a6bbd2;"></div>
<div style="position:absolute;left:1113px;top:409px;width:190px;height:31px;background:#a6bbd2;"></div>
<div style="position:absolute;left:1305px;top:409px;width:191px;height:31px;background:#a6bbd2;"></div>
<div style="position:absolute;left:1498px;top:409px;width:190px;height:31px;background:#a6bbd2;"></div>
<div style="position:absolute;left:1690px;top:409px;width:191px;height:31px;background:#cccccc;"></div>
<div class="c" style="left:9px;top:418px;"><a>33) Prosthetic Devices, Dentures, Eyeglasses</a></div>
<div class="n" style="left:343px;width:186.5px;top:418px;">1,195,705</div>
<div class="n" style="left:535px;width:187.5px;top:418px;">813,815</div>
<div class="n" style="left:728px;width:186.5px;top:418px;">960</div>
<div class="n" style="left:920px;width:187.5px;top:418px;">0</div>
<div class="n" style="left:1113px;width:186.5px;top:418px;">51</div>
<div class="n" style="left:1305px;width:186.2px;top:411px;">0.00%</div>
<div class="n" style="left:1305px;width:186.2px;top:424px;">68.12%</div>
<div class="n" style="left:1498px;width:186.5px;top:411px;">0</div>
<div class="n" style="left:1498px;width:186.5px;top:424px;">0</div>
<div class="n" style="left:1690px;width:186.5px;top:418px;">814,826</div>
<div style="position:absolute;left:5px;top:442px;width:336px;height:32px;background:#ffffff;"></div>
<div style="position:absolute;left:343px;top:442px;width:190px;height:32px;background:#ffffff;"></div>
<div style="position:absolute;left:535px;top:442px;width:191px;height:32px;background:#ffffff;"></div>
<div style="position:absolute;left:728px;top:442px;width:190px;height:32px;background:#ffffff;"></div>
<div style="position:absolute;left:920px;top:442px;width:191px;height:32px;background:#ffffff;"></div>
<div style="position:absolute;left:1113px;top:442px;width:190px;height:32px;background:#ffffff;"></div>
<div style="position:absolute;left:1305px;top:442px;width:191px;height:32px;background:#ffffff;"></div>
<div style="position:absolute;left:1498px;top:442px;width:190px;height:32px;background:#ffffff;"></div>
<div style="position:absolute;left:1690px;top:442px;width:191px;height:32px;background:#cccccc;"></div>
<div class="c" style="left:9px;top:451px;"><a>34) Diagnostic Screening &amp; Preventive Services</a></div>
<div class="n" style="left:343px;width:186.5px;top:451px;">0</div>
<div class="n" style="left:535px;width:187.5px;top:451px;">0</div>
<div class="n" style="left:728px;width:186.5px;top:451px;">0</div>
<div class="n" style="left:920px;width:187.5px;top:451px;">0</div>
<div class="n" style="left:1113px;width:186.5px;top:451px;">0</div>
<div class="n" style="left:1305px;width:186.2px;top:444px;">0.00%</div>
<div class="n" style="left:1305px;width:186.2px;top:458px;">68.12%</div>
<div class="n" style="left:1498px;width:186.5px;top:444px;">0</div>
<div class="n" style="left:1498px;width:186.5px;top:458px;">0</div>
<div class="n" style="left:1690px;width:186.5px;top:451px;">0</div>
<div style="position:absolute;left:5px;top:476px;width:336px;height:32px;background:#a6bbd2;"></div>
<div style="position:absolute;left:343px;top:476px;width:190px;height:32px;background:#cccccc;"></div>
<div style="position:absolute;left:535px;top:476px;width:191px;height:32px;background:#cccccc;"></div>
<div style="position:absolute;left:728px;top:476px;width:190px;height:32px;background:#cccccc;"></div>
<div style="position:absolute;left:920px;top:476px;width:191px;height:32px;background:#cccccc;"></div>
<div style="position:absolute;left:1113px;top:476px;width:190px;height:32px;background:#cccccc;"></div>
<div style="position:absolute;left:1305px;top:476px;width:191px;height:32px;background:#cccccc;"></div>
<div style="position:absolute;left:1498px;top:476px;width:190px;height:32px;background:#cccccc;"></div>
<div style="position:absolute;left:1690px;top:476px;width:191px;height:32px;background:#cccccc;"></div>
<div class="c" style="left:9px;top:478px;letter-spacing:0.04px;"><a>34A) Preventive Services Grade A OR B, ACIP Vaccines and</a></div>
<div class="c" style="left:9px;top:492px;letter-spacing:0.04px;"><a>their Admin</a></div>
<div class="n" style="left:343px;width:186.5px;top:485px;">0</div>
<div class="n" style="left:535px;width:187.5px;top:485px;">0</div>
<div class="n" style="left:728px;width:186.5px;top:485px;">0</div>
<div class="n" style="left:920px;width:187.5px;top:485px;">0</div>
<div class="n" style="left:1113px;width:186.5px;top:485px;">0</div>
<div class="n" style="left:1305px;width:186.2px;top:478px;">N/A</div>
<div class="n" style="left:1305px;width:186.2px;top:492px;">68.12%</div>
<div class="n" style="left:1498px;width:186.5px;top:478px;">0</div>
<div class="n" style="left:1498px;width:186.5px;top:492px;">0</div>
<div class="n" style="left:1690px;width:186.5px;top:485px;">0</div>
<div style="position:absolute;left:5px;top:510px;width:336px;height:31px;background:#ffffff;"></div>
<div style="position:absolute;left:343px;top:510px;width:190px;height:31px;background:#ffffff;"></div>
<div style="position:absolute;left:535px;top:510px;width:191px;height:31px;background:#ffffff;"></div>
<div style="position:absolute;left:728px;top:510px;width:190px;height:31px;background:#ffffff;"></div>
<div style="position:absolute;left:920px;top:510px;width:191px;height:31px;background:#ffffff;"></div>
<div style="position:absolute;left:1113px;top:510px;width:190px;height:31px;background:#ffffff;"></div>
<div style="position:absolute;left:1305px;top:510px;width:191px;height:31px;background:#ffffff;"></div>
<div style="position:absolute;left:1498px;top:510px;width:190px;height:31px;background:#ffffff;"></div>
<div style="position:absolute;left:1690px;top:510px;width:191px;height:31px;background:#cccccc;"></div>
<div class="c" style="left:9px;top:518px;"><a>35) Nurse Mid-Wife</a></div>
<div class="n" style="left:343px;width:186.5px;top:518px;">25,345</div>
<div class="n" style="left:535px;width:187.5px;top:518px;">17,265</div>
<div class="n" style="left:728px;width:186.5px;top:518px;">0</div>
<div class="n" style="left:920px;width:187.5px;top:518px;">0</div>
<div class="n" style="left:1113px;width:186.5px;top:518px;">0</div>
<div class="n" style="left:1305px;width:186.2px;top:511px;">0.00%</div>
<div class="n" style="left:1305px;width:186.2px;top:525px;">68.12%</div>
<div class="n" style="left:1498px;width:186.5px;top:511px;">0</div>
<div class="n" style="left:1498px;width:186.5px;top:525px;">0</div>
<div class="n" style="left:1690px;width:186.5px;top:518px;">17,265</div>
<div style="position:absolute;left:5px;top:543px;width:336px;height:32px;background:#a6bbd2;"></div>
<div style="position:absolute;left:343px;top:543px;width:190px;height:32px;background:#a6bbd2;"></div>
<div style="position:absolute;left:535px;top:543px;width:191px;height:32px;background:#a6bbd2;"></div>
<div style="position:absolute;left:728px;top:543px;width:190px;height:32px;background:#a6bbd2;"></div>
<div style="position:absolute;left:920px;top:543px;width:191px;height:32px;background:#a6bbd2;"></div>
<div style="position:absolute;left:1113px;top:543px;width:190px;height:32px;background:#a6bbd2;"></div>
<div style="position:absolute;left:1305px;top:543px;width:191px;height:32px;background:#a6bbd2;"></div>
<div style="position:absolute;left:1498px;top:543px;width:190px;height:32px;background:#a6bbd2;"></div>
<div style="position:absolute;left:1690px;top:543px;width:191px;height:32px;background:#cccccc;"></div>
<div class="c" style="left:9px;top:552px;"><a>36) Emergency Hospital Services</a></div>
<div class="n" style="left:343px;width:186.5px;top:552px;">0</div>
<div class="n" style="left:535px;width:187.5px;top:552px;">0</div>
<div class="n" style="left:728px;width:186.5px;top:552px;">0</div>
<div class="n" style="left:920px;width:187.5px;top:552px;">0</div>
<div class="n" style="left:1113px;width:186.5px;top:552px;">0</div>
<div class="n" style="left:1305px;width:186.2px;top:545px;">0.00%</div>
<div class="n" style="left:1305px;width:186.2px;top:559px;">68.12%</div>
<div class="n" style="left:1498px;width:186.5px;top:545px;">0</div>
<div class="n" style="left:1498px;width:186.5px;top:559px;">0</div>
<div class="n" style="left:1690px;width:186.5px;top:552px;">0</div>
<div style="position:absolute;left:5px;top:577px;width:336px;height:31px;background:#ffffff;"></div>
<div style="position:absolute;left:343px;top:577px;width:190px;height:31px;background:#ffffff;"></div>
<div style="position:absolute;left:535px;top:577px;width:191px;height:31px;background:#ffffff;"></div>
<div style="position:absolute;left:728px;top:577px;width:190px;height:31px;background:#ffffff;"></div>
<div style="position:absolute;left:920px;top:577px;width:191px;height:31px;background:#ffffff;"></div>
<div style="position:absolute;left:1113px;top:577px;width:190px;height:31px;background:#ffffff;"></div>
<div style="position:absolute;left:1305px;top:577px;width:191px;height:31px;background:#ffffff;"></div>
<div style="position:absolute;left:1498px;top:577px;width:190px;height:31px;background:#ffffff;"></div>
<div style="position:absolute;left:1690px;top:577px;width:191px;height:31px;background:#cccccc;"></div>
<div class="c" style="left:9px;top:586px;"><a>37) Critical Access Hospitals</a></div>
<div class="n" style="left:343px;width:186.5px;top:586px;">0</div>
<div class="n" style="left:535px;width:187.5px;top:586px;">0</div>
<div class="n" style="left:728px;width:186.5px;top:586px;">0</div>
<div class="n" style="left:920px;width:187.5px;top:586px;">0</div>
<div class="n" style="left:1113px;width:186.5px;top:586px;">0</div>
<div class="n" style="left:1305px;width:186.2px;top:579px;">0.00%</div>
<div class="n" style="left:1305px;width:186.2px;top:592px;">68.12%</div>
<div class="n" style="left:1498px;width:186.5px;top:579px;">0</div>
<div class="n" style="left:1498px;width:186.5px;top:592px;">0</div>
<div class="n" style="left:1690px;width:186.5px;top:586px;">0</div>
<div style="position:absolute;left:5px;top:610px;width:336px;height:32px;background:#a6bbd2;"></div>
<div style="position:absolute;left:343px;top:610px;width:190px;height:32px;background:#a6bbd2;"></div>
<div style="position:absolute;left:535px;top:610px;width:191px;height:32px;background:#a6bbd2;"></div>
<div style="position:absolute;left:728px;top:610px;width:190px;height:32px;background:#a6bbd2;"></div>
<div style="position:absolute;left:920px;top:610px;width:191px;height:32px;background:#a6bbd2;"></div>
<div style="position:absolute;left:1113px;top:610px;width:190px;height:32px;background:#a6bbd2;"></div>
<div style="position:absolute;left:1305px;top:610px;width:191px;height:32px;background:#a6bbd2;"></div>
<div style="position:absolute;left:1498px;top:610px;width:190px;height:32px;background:#a6bbd2;"></div>
<div style="position:absolute;left:1690px;top:610px;width:191px;height:32px;background:#cccccc;"></div>
<div class="c" style="left:9px;top:619px;"><a>38) Nurse Practitioner Services</a></div>
<div class="n" style="left:343px;width:186.5px;top:619px;">5,915,983</div>
<div class="n" style="left:535px;width:187.5px;top:619px;">4,025,127</div>
<div class="n" style="left:728px;width:186.5px;top:619px;">4,381</div>
<div class="n" style="left:920px;width:187.5px;top:619px;">0</div>
<div class="n" style="left:1113px;width:186.5px;top:619px;">2,117</div>
<div class="n" style="left:1305px;width:186.2px;top:612px;">0.00%</div>
<div class="n" style="left:1305px;width:186.2px;top:626px;">68.12%</div>
<div class="n" style="left:1498px;width:186.5px;top:612px;">0</div>
<div class="n" style="left:1498px;width:186.5px;top:626px;">0</div>
<div class="n" style="left:1690px;width:186.5px;top:619px;">4,031,625</div>
<div style="position:absolute;left:5px;top:644px;width:336px;height:32px;background:#ffffff;"></div>
<div style="position:absolute;left:343px;top:644px;width:190px;height:32px;background:#cccccc;"></div>
<div style="position:absolute;left:535px;top:644px;width:191px;height:32px;background:#cccccc;"></div>
<div style="position:absolute;left:728px;top:644px;width:190px;height:32px;background:#cccccc;"></div>
<div style="position:absolute;left:920px;top:644px;width:191px;height:32px;background:#cccccc;"></div>
<div style="position:absolute;left:1113px;top:644px;width:190px;height:32px;background:#cccccc;"></div>
<div style="position:absolute;left:1305px;top:644px;width:191px;height:32px;background:#cccccc;"></div>
<div style="position:absolute;left:1498px;top:644px;width:190px;height:32px;background:#cccccc;"></div>
<div style="position:absolute;left:1690px;top:644px;width:191px;height:32px;background:#cccccc;"></div>
<div class="c" style="left:9px;top:653px;"><a>39) School Based Services</a></div>
<div class="n" style="left:343px;width:186.5px;top:653px;">0</div>
<div class="n" style="left:535px;width:187.5px;top:653px;">0</div>
<div class="n" style="left:728px;width:186.5px;top:653px;">0</div>
<div class="n" style="left:920px;width:187.5px;top:653px;">0</div>
<div class="n" style="left:1113px;width:186.5px;top:653px;">0</div>
<div class="n" style="left:1305px;width:186.2px;top:646px;">N/A</div>
<div class="n" style="left:1305px;width:186.2px;top:659px;">68.12%</div>
<div class="n" style="left:1498px;width:186.5px;top:646px;">0</div>
<div class="n" style="left:1498px;width:186.5px;top:659px;">0</div>
<div class="n" style="left:1690px;width:186.5px;top:653px;">0</div>
<div style="position:absolute;left:5px;top:678px;width:336px;height:37px;background:#a6bbd2;"></div>
<div style="position:absolute;left:343px;top:678px;width:190px;height:37px;background:#cccccc;"></div>
<div style="position:absolute;left:535px;top:678px;width:191px;height:37px;background:#cccccc;"></div>
<div style="position:absolute;left:728px;top:678px;width:190px;height:37px;background:#cccccc;"></div>
<div style="position:absolute;left:920px;top:678px;width:191px;height:37px;background:#cccccc;"></div>
<div style="position:absolute;left:1113px;top:678px;width:190px;height:37px;background:#cccccc;"></div>
<div style="position:absolute;left:1305px;top:678px;width:191px;height:37px;background:#cccccc;"></div>
<div style="position:absolute;left:1498px;top:678px;width:190px;height:37px;background:#cccccc;"></div>
<div style="position:absolute;left:1690px;top:678px;width:191px;height:37px;background:#cccccc;"></div>
<div class="c" style="left:9px;top:679px;"><a>40) Rehabilitative Services (non-school-based)</a></div>
<div class="btn" style="left:10px;top:694px;width:99px;height:18px;font-size:9.6px;line-height:17px;letter-spacing:0.3px;">View Rehab Svcs</div>
<div class="n" style="left:343px;width:186.5px;top:689px;">36,275,219</div>
<div class="n" style="left:535px;width:187.5px;top:689px;">24,694,827</div>
<div class="n" style="left:728px;width:186.5px;top:689px;">22,728</div>
<div class="n" style="left:920px;width:187.5px;top:689px;">0</div>
<div class="n" style="left:1113px;width:186.5px;top:689px;">422</div>
<div class="n" style="left:1305px;width:186.2px;top:682px;">N/A</div>
<div class="n" style="left:1305px;width:186.2px;top:696px;">68.12%</div>
<div class="n" style="left:1498px;width:186.5px;top:682px;">0</div>
<div class="n" style="left:1498px;width:186.5px;top:696px;">0</div>
<div class="n" style="left:1690px;width:186.5px;top:689px;">24,717,977</div>
<div style="position:absolute;left:5px;top:717px;width:336px;height:32px;background:#ffffff;"></div>
<div style="position:absolute;left:343px;top:717px;width:190px;height:32px;background:#ffffff;"></div>
<div style="position:absolute;left:535px;top:717px;width:191px;height:32px;background:#ffffff;"></div>
<div style="position:absolute;left:728px;top:717px;width:190px;height:32px;background:#ffffff;"></div>
<div style="position:absolute;left:920px;top:717px;width:191px;height:32px;background:#ffffff;"></div>
<div style="position:absolute;left:1113px;top:717px;width:190px;height:32px;background:#ffffff;"></div>
<div style="position:absolute;left:1305px;top:717px;width:191px;height:32px;background:#ffffff;"></div>
<div style="position:absolute;left:1498px;top:717px;width:190px;height:32px;background:#ffffff;"></div>
<div style="position:absolute;left:1690px;top:717px;width:191px;height:32px;background:#cccccc;"></div>
<div class="c" style="left:9px;top:726px;"><a>41) Private Duty Nursing</a></div>
<div class="n" style="left:343px;width:186.5px;top:726px;">1,165,096</div>
<div class="n" style="left:535px;width:187.5px;top:726px;">793,663</div>
<div class="n" style="left:728px;width:186.5px;top:726px;">0</div>
<div class="n" style="left:920px;width:187.5px;top:726px;">0</div>
<div class="n" style="left:1113px;width:186.5px;top:726px;">0</div>
<div class="n" style="left:1305px;width:186.2px;top:719px;">0.00%</div>
<div class="n" style="left:1305px;width:186.2px;top:733px;">68.12%</div>
<div class="n" style="left:1498px;width:186.5px;top:719px;">0</div>
<div class="n" style="left:1498px;width:186.5px;top:733px;">0</div>
<div class="n" style="left:1690px;width:186.5px;top:726px;">793,663</div>
<div style="position:absolute;left:5px;top:751px;width:336px;height:31px;background:#a6bbd2;"></div>
<div style="position:absolute;left:343px;top:751px;width:190px;height:31px;background:#a6bbd2;"></div>
<div style="position:absolute;left:535px;top:751px;width:191px;height:31px;background:#a6bbd2;"></div>
<div style="position:absolute;left:728px;top:751px;width:190px;height:31px;background:#a6bbd2;"></div>
<div style="position:absolute;left:920px;top:751px;width:191px;height:31px;background:#a6bbd2;"></div>
<div style="position:absolute;left:1113px;top:751px;width:190px;height:31px;background:#a6bbd2;"></div>
<div style="position:absolute;left:1305px;top:751px;width:191px;height:31px;background:#a6bbd2;"></div>
<div style="position:absolute;left:1498px;top:751px;width:190px;height:31px;background:#a6bbd2;"></div>
<div style="position:absolute;left:1690px;top:751px;width:191px;height:31px;background:#cccccc;"></div>
<div class="c" style="left:9px;top:759px;"><a>42) Freestanding Birth Center</a></div>
<div class="n" style="left:343px;width:186.5px;top:759px;">0</div>
<div class="n" style="left:535px;width:187.5px;top:759px;">0</div>
<div class="n" style="left:728px;width:186.5px;top:759px;">0</div>
<div class="n" style="left:920px;width:187.5px;top:759px;">0</div>
<div class="n" style="left:1113px;width:186.5px;top:759px;">0</div>
<div class="n" style="left:1305px;width:186.2px;top:752px;">0.00%</div>
<div class="n" style="left:1305px;width:186.2px;top:766px;">68.12%</div>
<div class="n" style="left:1498px;width:186.5px;top:752px;">0</div>
<div class="n" style="left:1498px;width:186.5px;top:766px;">0</div>
<div class="n" style="left:1690px;width:186.5px;top:759px;">0</div>
<div style="position:absolute;left:5px;top:784px;width:336px;height:32px;background:#ffffff;"></div>
<div style="position:absolute;left:343px;top:784px;width:190px;height:32px;background:#cccccc;"></div>
<div style="position:absolute;left:535px;top:784px;width:191px;height:32px;background:#cccccc;"></div>
<div style="position:absolute;left:728px;top:784px;width:190px;height:32px;background:#cccccc;"></div>
<div style="position:absolute;left:920px;top:784px;width:191px;height:32px;background:#cccccc;"></div>
<div style="position:absolute;left:1113px;top:784px;width:190px;height:32px;background:#cccccc;"></div>
<div style="position:absolute;left:1305px;top:784px;width:191px;height:32px;background:#cccccc;"></div>
<div style="position:absolute;left:1498px;top:784px;width:190px;height:32px;background:#cccccc;"></div>
<div style="position:absolute;left:1690px;top:784px;width:191px;height:32px;background:#cccccc;"></div>
<div class="c" style="left:9px;top:793px;"><a>43) Health Home for Enrollees w Chronic Conditions</a></div>
<div class="n" style="left:343px;width:186.5px;top:793px;">0</div>
<div class="n" style="left:535px;width:187.5px;top:793px;">0</div>
<div class="n" style="left:728px;width:186.5px;top:793px;">0</div>
<div class="n" style="left:920px;width:187.5px;top:793px;">0</div>
<div class="n" style="left:1113px;width:186.5px;top:793px;">0</div>
<div class="n" style="left:1305px;width:186.2px;top:786px;">N/A</div>
<div class="n" style="left:1305px;width:186.2px;top:800px;">68.12%</div>
<div class="n" style="left:1498px;width:186.5px;top:786px;">0</div>
<div class="n" style="left:1498px;width:186.5px;top:800px;">0</div>
<div class="n" style="left:1690px;width:186.5px;top:793px;">0</div>
<div style="position:absolute;left:5px;top:818px;width:336px;height:31px;background:#a6bbd2;"></div>
<div style="position:absolute;left:343px;top:818px;width:190px;height:31px;background:#a6bbd2;"></div>
<div style="position:absolute;left:535px;top:818px;width:191px;height:31px;background:#a6bbd2;"></div>
<div style="position:absolute;left:728px;top:818px;width:190px;height:31px;background:#a6bbd2;"></div>
<div style="position:absolute;left:920px;top:818px;width:191px;height:31px;background:#a6bbd2;"></div>
<div style="position:absolute;left:1113px;top:818px;width:190px;height:31px;background:#a6bbd2;"></div>
<div style="position:absolute;left:1305px;top:818px;width:191px;height:31px;background:#a6bbd2;"></div>
<div style="position:absolute;left:1498px;top:818px;width:190px;height:31px;background:#a6bbd2;"></div>
<div style="position:absolute;left:1690px;top:818px;width:191px;height:31px;background:#cccccc;"></div>
<div class="c" style="left:9px;top:826px;"><a>44) Tobacco Cessation for Preg Women</a></div>
<div class="n" style="left:343px;width:186.5px;top:826px;">8,007</div>
<div class="n" style="left:535px;width:187.5px;top:826px;">5,454</div>
<div class="n" style="left:728px;width:186.5px;top:826px;">0</div>
<div class="n" style="left:920px;width:187.5px;top:826px;">0</div>
<div class="n" style="left:1113px;width:186.5px;top:826px;">0</div>
<div class="n" style="left:1305px;width:186.2px;top:819px;">0.00%</div>
<div class="n" style="left:1305px;width:186.2px;top:833px;">68.12%</div>
<div class="n" style="left:1498px;width:186.5px;top:819px;">0</div>
<div class="n" style="left:1498px;width:186.5px;top:833px;">0</div>
<div class="n" style="left:1690px;width:186.5px;top:826px;">5,454</div>
<div style="position:absolute;left:5px;top:851px;width:336px;height:32px;background:#ffffff;"></div>
<div style="position:absolute;left:343px;top:851px;width:190px;height:32px;background:#ffffff;"></div>
<div style="position:absolute;left:535px;top:851px;width:191px;height:32px;background:#ffffff;"></div>
<div style="position:absolute;left:728px;top:851px;width:190px;height:32px;background:#ffffff;"></div>
<div style="position:absolute;left:920px;top:851px;width:191px;height:32px;background:#ffffff;"></div>
<div style="position:absolute;left:1113px;top:851px;width:190px;height:32px;background:#ffffff;"></div>
<div style="position:absolute;left:1305px;top:851px;width:191px;height:32px;background:#ffffff;"></div>
<div style="position:absolute;left:1498px;top:851px;width:190px;height:32px;background:#ffffff;"></div>
<div style="position:absolute;left:1690px;top:851px;width:191px;height:32px;background:#cccccc;"></div>
<div class="c" style="left:9px;top:860px;"><a>49) Other Care Services</a></div>
<div class="n" style="left:343px;width:186.5px;top:860px;">3,563,151</div>
<div class="n" style="left:535px;width:187.5px;top:860px;">2,424,602</div>
<div class="n" style="left:728px;width:186.5px;top:860px;">2,947</div>
<div class="n" style="left:920px;width:187.5px;top:860px;">0</div>
<div class="n" style="left:1113px;width:186.5px;top:860px;">694</div>
<div class="n" style="left:1305px;width:186.2px;top:853px;">0.00%</div>
<div class="n" style="left:1305px;width:186.2px;top:867px;">68.12%</div>
<div class="n" style="left:1498px;width:186.5px;top:853px;">0</div>
<div class="n" style="left:1498px;width:186.5px;top:867px;">0</div>
<div class="n" style="left:1690px;width:186.5px;top:860px;">2,428,243</div>
<div style="position:absolute;left:5px;top:885px;width:336px;height:32px;background:#a6bbd2;"></div>
<div style="position:absolute;left:343px;top:885px;width:190px;height:32px;background:#cccccc;"></div>
<div style="position:absolute;left:535px;top:885px;width:191px;height:32px;background:#cccccc;"></div>
<div style="position:absolute;left:728px;top:885px;width:190px;height:32px;background:#cccccc;"></div>
<div style="position:absolute;left:920px;top:885px;width:191px;height:32px;background:#cccccc;"></div>
<div style="position:absolute;left:1113px;top:885px;width:190px;height:32px;background:#cccccc;"></div>
<div style="position:absolute;left:1305px;top:885px;width:191px;height:32px;background:#cccccc;"></div>
<div style="position:absolute;left:1498px;top:885px;width:190px;height:32px;background:#cccccc;"></div>
<div style="position:absolute;left:1690px;top:885px;width:191px;height:32px;background:#cccccc;"></div>
<div class="c" style="left:9px;top:894px;"><a>50) Total</a></div>
<div class="n" style="left:343px;width:186.5px;top:894px;">1,084,112,077</div>
<div class="n" style="left:535px;width:187.5px;top:894px;">734,038,640</div>
<div class="n" style="left:728px;width:186.5px;top:894px;">618,034</div>
<div class="n" style="left:920px;width:187.5px;top:894px;">5,753,981</div>
<div class="n" style="left:1113px;width:186.5px;top:894px;">319,525</div>
<div class="n" style="left:1305px;width:186.2px;top:887px;">0.00%</div>
<div class="n" style="left:1305px;width:186.2px;top:900px;">68.12%</div>
<div class="n" style="left:1498px;width:186.5px;top:887px;">4,434,020</div>
<div class="n" style="left:1498px;width:186.5px;top:900px;">0</div>
<div class="n" style="left:1690px;width:186.5px;top:894px;">745,164,200</div>
<div style="position:absolute;left:1884px;top:368px;width:16px;height:551px;background:linear-gradient(90deg,#e3e3e3,#f0f0f0 30%,#f0f0f0 70%,#e8e8e8);"></div>
<div class="abs" style="left:1888px;top:375px;width:0;height:0;border-left:4px solid transparent;border-right:4px solid transparent;border-bottom:4px solid #303030;"></div>
<div class="abs" style="left:1888.5px;top:909px;width:0;height:0;border-left:3.5px solid transparent;border-right:3.5px solid transparent;border-top:4px solid #303030;"></div>
<div class="abs" style="left:1884px;top:807px;width:15px;height:94px;border:1px solid #979797;border-radius:2px;background:linear-gradient(90deg,#f4f4f4,#e2e2e6 45%,#cfd0d6 55%,#d8d8dc);"></div>
<div class="abs" style="left:1888px;top:850px;width:7px;height:1px;background:#5a5a5a;"></div>
<div class="abs" style="left:1888px;top:853px;width:7px;height:1px;background:#5a5a5a;"></div>
<div class="abs" style="left:1888px;top:856px;width:7px;height:1px;background:#5a5a5a;"></div>
<div class="abs" style="left:3.5px;top:932.5px;font-size:10px;line-height:12px;white-space:nowrap;letter-spacing:0.017px;">* Optional Breast &amp; Cervical Cancer Services calculated at an Enhanced FMAP rate of 77.68% and/or the IHS Services rate of 100%</div>
<div class="btn" style="left:850px;top:956px;width:56px;height:19px;font-size:12px;line-height:17px;">Return</div>
<div class="btn" style="left:915px;top:956px;width:45px;height:19px;font-size:12px;line-height:17px;">Print</div>
<div class="btn" style="left:968px;top:956px;width:50px;height:19px;font-size:12px;line-height:17px;">Excel</div>
<div class="abs" style="left:0;top:1056px;width:1920px;height:1px;background:#8c8c8c;"></div>
<div class="abs" style="left:0;top:1057px;width:1919px;height:21px;background:#f0eded;"></div>
<svg class="abs" style="left:1830px;top:1060px" width="15" height="15" viewBox="0 0 15 15"><path d="M8.5 8.5 L13 13" stroke="#b0672a" stroke-width="2.4" stroke-linecap="round"/><circle cx="5.6" cy="5.6" r="4.6" fill="#eef4fb" stroke="#8a9bb0" stroke-width="1.1"/><path d="M5.6 2.8 V8.4 M2.8 5.6 H8.4" stroke="#1767cf" stroke-width="2"/></svg>
<div class="ui" style="left:1846px;top:1061px;font-size:12px;line-height:14px;font-weight:normal;letter-spacing:-1.001px;">100%</div>
<div class="abs" style="left:1889px;top:1066px;width:0;height:0;border-left:4px solid transparent;border-right:4px solid transparent;border-top:4px solid #222;"></div>
<div class="abs" style="left:1914px;top:1074px;width:2px;height:2px;background:#d9d6d6;"></div>
<div class="abs" style="left:1910px;top:1074px;width:2px;height:2px;background:#d9d6d6;"></div>
<div class="abs" style="left:1906px;top:1074px;width:2px;height:2px;background:#d9d6d6;"></div>
<div class="abs" style="left:1914px;top:1070px;width:2px;height:2px;background:#d9d6d6;"></div>
<div class="abs" style="left:1910px;top:1070px;width:2px;height:2px;background:#d9d6d6;"></div>
<div class="abs" style="left:1914px;top:1066px;width:2px;height:2px;background:#d9d6d6;"></div>
</body></html>
